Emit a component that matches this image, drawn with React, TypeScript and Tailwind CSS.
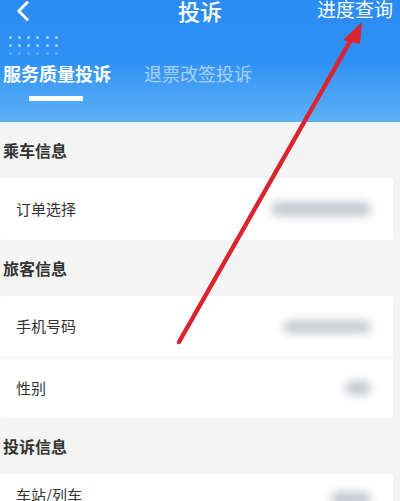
import React from 'react';
import { ChevronLeft } from 'lucide-react';

const font = { fontFamily: '"Noto Sans CJK SC", "Noto Sans", sans-serif' };

const Blur = ({ className }: { className: string }) => (
  <div className={`rounded-full bg-gray-400/60 blur-[5px] ${className}`} />
);

const Row = ({ label, value, last }: { label: string; value: string; last?: boolean }) => (
  <div className={`flex h-[62px] items-center justify-between pl-[16px] pr-[22px] ${last ? '' : 'border-b border-[#f2f2f2]'}`}>
    <span className="text-[15px] text-[#333]">{label}</span>
    <Blur className={value} />
  </div>
);

const Section = ({ title }: { title: string }) => (
  <div className="flex h-[56px] items-center pl-[3px] text-[16px] font-semibold text-[#333]">{title}</div>
);

export default function App() {
  return (
    <div className="relative h-[501px] w-[400px] overflow-hidden bg-[#f4f4f4]" style={font}>
      {/* Header */}
      <div className="h-[122px] bg-gradient-to-b from-[#2a8cf4] via-[#2f91f5] to-[#5db0f4] text-white">
        <div className="relative flex h-[24px] items-start justify-center">
          <ChevronLeft className="absolute -top-[6px] left-[6px] h-[34px] w-[34px] stroke-[2]" />
          <span className="-mt-[3px] text-[22px] font-medium leading-[26px]">投诉</span>
          <span className="absolute -top-[3px] right-[7px] text-[19px] leading-[24px]">进度查询</span>
        </div>
        <div className="ml-[9px] mt-[12px] grid w-[50px] grid-cols-6 gap-x-[5px] gap-y-[5px]">
          {Array.from({ length: 18 }).map((_, i) => (
            <div key={i} className={`h-[3px] w-[3px] rounded-full ${i < 12 ? 'bg-white/60' : 'bg-white/25'}`} />
          ))}
        </div>
        <div className="mt-[7px] flex gap-[33px] pl-[3px] text-[18px] leading-[22px]">
          <div className="flex flex-col">
            <span className="font-semibold">服务质量投诉</span>
            <div className="ml-[26px] mt-[12px] h-[5px] w-[54px] bg-white" />
          </div>
          <span className="text-white/55">退票改签投诉</span>
        </div>
      </div>

      {/* Content */}
      <div className="pr-[7px]">
        <Section title="乘车信息" />
        <div className="rounded-sm bg-white">
          <Row label="订单选择" value="h-[14px] w-[100px]" last />
        </div>
        <Section title="旅客信息" />
        <div className="rounded-sm bg-white">
          <Row label="手机号码" value="h-[12px] w-[88px]" />
          <div className="flex h-[60px] items-center justify-between pl-[16px] pr-[22px]">
            <span className="text-[15px] text-[#333]">性别</span>
            <Blur className="h-[14px] w-[26px]" />
          </div>
        </div>
        <Section title="投诉信息" />
        <div className="rounded-sm bg-white">
          <div className="flex h-[40px] items-start justify-between pl-[16px] pr-[22px] pt-[12px]">
            <span className="text-[15px] leading-[18px] text-[#333]">车站/列车</span>
            <Blur className="mt-[6px] h-[14px] w-[40px]" />
          </div>
        </div>
      </div>

      {/* Red arrow overlay */}
      <svg className="pointer-events-none absolute left-0 top-0" width="400" height="501" viewBox="0 0 400 501">
        <line x1="179" y1="342" x2="352" y2="38" stroke="#dc2430" strokeWidth="4.5" strokeLinecap="round" />
        <polygon points="362,22 343,40 360,44" fill="#dc2430" />
      </svg>
    </div>
  );
}
